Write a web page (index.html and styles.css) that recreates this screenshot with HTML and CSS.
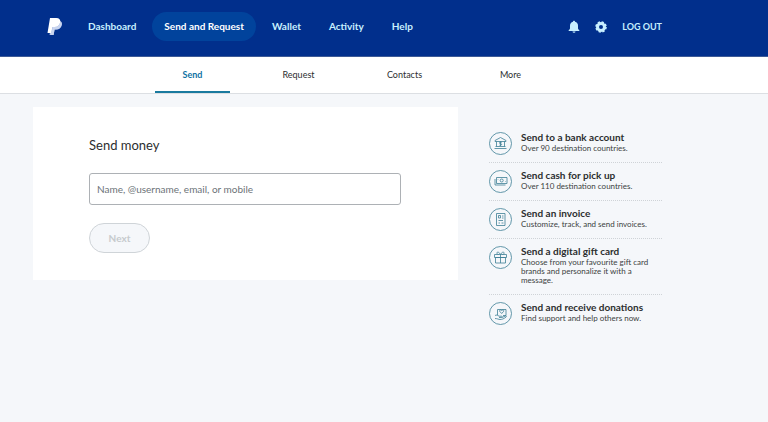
FILE: index.html
```html
<!DOCTYPE html>
<html lang="en">
    <head>
        <meta charset="utf-8">
        <title>Send money - PayPal</title>
        <link rel="stylesheet" href="styles.css">
    </head>
    <body>
        <header class="header">
            <a class="logo" href="#" aria-label="PayPal">
                <svg width="16" height="19" viewBox="0 0 16 19">
                    <path d="M5 3.500h6c3 0 4.300 1.600 3.800 4.300-.6 3.200-2.600 4.700-5.600 4.700H7.600L6.600 18H2.500z" fill="#9fb2de"/>
                    <path d="M3 1h6.300c3 0 4.400 1.600 3.900 4.300-.6 3.200-2.700 4.800-5.700 4.800H5.400L4.200 16H.5z" fill="#fff"/>
                    <path d="M5.800 10.100h1.700c3 0 5.100-1.600 5.700-4.800l.1-.9c1.400.7 1.800 1.900 1.500 3.400-.6 3.200-2.600 4.700-5.600 4.700H7.600L6.600 18H3.200l.4-2h.6z" fill="#c9d5ef"/>
                </svg>
            </a>
            <nav class="menu">
                <a class="menu-link" href="#">Dashboard</a>
                <a class="menu-link active" href="#">Send and Request</a>
                <a class="menu-link" href="#">Wallet</a>
                <a class="menu-link" href="#">Activity</a>
                <a class="menu-link" href="#">Help</a>
            </nav>
            <div class="account">
                <a class="account-link" href="#" aria-label="Notifications">
                    <svg width="12" height="14" viewBox="0 0 12 14" fill="currentColor">
                        <path d="M6 .8c.7 0 1 .4 1 .9 2 .5 3 2 3 4v2.500c0 .8.500 1.300 1.300 1.800v1H.7v-1C1.500 9.500 2 9 2 8.200V5.700c0-2 1-3.500 3-4 0-.5.3-.9 1-.9z"/>
                        <path d="M4.500 11.500h3a1.500 1.300 0 0 1-3 0z"/>
                    </svg>
                </a>
                <a class="account-link" href="#" aria-label="Settings">
                    <svg width="12" height="12" viewBox="0 0 12 12">
                        <circle cx="6" cy="6" r="3.500" fill="none" stroke="currentColor" stroke-width="3"/>
                        <circle cx="6" cy="6" r="5" fill="none" stroke="currentColor" stroke-width="1.600" stroke-dasharray="2.300 1.627"/>
                    </svg>
                </a>
                <a class="logout" href="#">LOG OUT</a>
            </div>
        </header>

        <nav class="tabs">
            <a class="tab active" href="#">Send</a>
            <a class="tab" href="#">Request</a>
            <a class="tab" href="#">Contacts</a>
            <a class="tab" href="#">More</a>
        </nav>

        <main class="main">
            <form class="card">
                <h1 class="title">Send money</h1>
                <input class="recipient" type="text" placeholder="Name, @username, email, or mobile" aria-label="Name, @username, email, or mobile">
                <button class="next" type="button" disabled>Next</button>
            </form>

            <aside class="options">
                <a class="option" href="#">
                    <svg class="icon" viewBox="0 0 23 23">
                        <circle cx="11.500" cy="11.500" r="11"/>
                        <path d="M6 8.500 11.500 5.500 17 8.500v1H6zM7.500 9.500v5M15.500 9.500v5M6.500 14.500h10M5.500 16.500h12"/>
                        <path d="M12.800 10.200h-1.600c-1 0-1 1.500 0 1.500h.7c1 0 1 1.500 0 1.500h-1.500M11.500 9.500v4.500"/>
                    </svg>
                    <div class="text">
                        <h2 class="name">Send to a bank account</h2>
                        <p class="info">Over 90 destination countries.</p>
                    </div>
                </a>
                <a class="option" href="#">
                    <svg class="icon" viewBox="0 0 23 23">
                        <circle cx="11.500" cy="11.500" r="11"/>
                        <path d="M7.500 7.500h10.500v6H7.500zM6 9v6h10.500"/>
                        <circle cx="12.700" cy="10.500" r="1.500"/>
                        <path d="M9 9v.5M16.500 11.500v.5"/>
                    </svg>
                    <div class="text">
                        <h2 class="name">Send cash for pick up</h2>
                        <p class="info">Over 110 destination countries.</p>
                    </div>
                </a>
                <a class="option" href="#">
                    <svg class="icon" viewBox="0 0 23 23">
                        <circle cx="11.500" cy="11.500" r="11"/>
                        <path d="M7.500 5.500h8.500v12H7.500zM9.500 7.500h2v2.500h-2zM13 8h1.500M13 10h1.500M9.500 12.500h4.500M9.500 15h1.500M12.500 15h2"/>
                    </svg>
                    <div class="text">
                        <h2 class="name">Send an invoice</h2>
                        <p class="info">Customize, track, and send invoices.</p>
                    </div>
                </a>
                <a class="option" href="#">
                    <svg class="icon" viewBox="0 0 23 23">
                        <circle cx="11.500" cy="11.500" r="11"/>
                        <path d="M5.500 8.500h12v3h-12zM6.500 11.500h10v5.500h-10zM11.500 8.500v8.500"/>
                        <path d="M11.500 8.500C10 5.500 7.500 5.500 8 7.500c.2.700 1 1 1.500 1M11.500 8.500c1.500-3 4-3 3.500-1-.2.700-1 1-1.500 1"/>
                    </svg>
                    <div class="text">
                        <h2 class="name">Send a digital gift card</h2>
                        <p class="info">Choose from your favourite gift card brands and personalize it with a message.</p>
                    </div>
                </a>
                <a class="option" href="#">
                    <svg class="icon" viewBox="0 0 23 23">
                        <circle cx="11.500" cy="11.500" r="11"/>
                        <path d="M8.500 13V7.500h8.500v6H14"/>
                        <path d="M12.700 11.500 10.700 9.300c-.6-1.200 1.300-2 2-.7.700-1.300 2.600-.5 2 .7z"/>
                        <path d="M6 13.500c1.500-.8 2.500-.5 4 .7h2.500c1 0 .8 1.300 0 1.300H10M12.800 15.500l3.700-1.500c1-.2 1.200.6.500 1.100-2.500 1.900-4 2.400-6 2.400-1.500 0-2.500-1-5-1"/>
                    </svg>
                    <div class="text">
                        <h2 class="name">Send and receive donations</h2>
                        <p class="info">Find support and help others now.</p>
                    </div>
                </a>
            </aside>
        </main>
    </body>
</html>
```

FILE: styles.css
```css
* {
    box-sizing: border-box;
}

body {
    margin: 0;
    font-family: Lato, "Liberation Sans", sans-serif;
    background-color: #f5f7fa;
    color: #2c2e2f;
}

a {
    color: inherit;
    text-decoration: none;
}

.header {
    display: flex;
    align-items: center;
    height: 57px;
    padding: 0 106px 3px 47px;
    border-bottom: 1px solid #3d5a96;
    background-color: #012f8c;
    color: #c8efff;
    font-weight: bold;
}

.logo {
    display: flex;
    margin-right: 13px;
}

.menu {
    display: flex;
    gap: 4px;
    font-size: 10px;
}

.menu-link {
    padding: 0 12px;
    border-radius: 15px;
    line-height: 29px;
}

.menu-link.active {
    background-color: #01439c;
    color: white;
}

.account {
    display: flex;
    align-items: center;
    gap: 15px;
    margin-left: auto;
    font-size: 9px;
}

.account-link {
    display: flex;
}

.tabs {
    display: flex;
    justify-content: center;
    gap: 31px;
    height: 37px;
    padding-right: 65px;
    border-bottom: 1px solid #dcdfe3;
    background-color: white;
    font-size: 9px;
    line-height: 35px;
}

.tab {
    width: 75px;
    text-align: center;
}

.tab.active {
    border-bottom: 2px solid #1a7a9f;
    color: #1072a4;
    font-weight: bold;
}

.main {
    display: flex;
    align-items: flex-start;
    gap: 31px;
    padding: 13px 106px 13px 33px;
}

.card {
    flex: 1;
    padding: 28px 57px 27px 56px;
    background-color: white;
}

.title {
    margin: 0 0 18px;
    font-size: 13px;
    font-weight: normal;
    line-height: 20px;
}

.recipient {
    display: block;
    width: 100%;
    height: 32px;
    margin-bottom: 18px;
    padding: 0 7px;
    border: 1px solid #adb1b5;
    border-radius: 3px;
    font-family: inherit;
    font-size: 10px;
}

.recipient::placeholder {
    color: #6c7378;
}

.next {
    width: 61px;
    height: 30px;
    border: 1px solid #cfd4d8;
    border-radius: 15px;
    background-color: #f5f7fa;
    color: #c6cacd;
    font-family: inherit;
    font-size: 10px;
    font-weight: bold;
}

.options {
    width: 173px;
    padding-top: 18px;
}

.option {
    display: flex;
    gap: 9px;
    padding: 6px 0 7px;
    border-bottom: 1px dotted #cfd3d7;
}

.option:last-child {
    border-bottom: none;
}

.icon {
    flex: none;
    width: 23px;
    height: 23px;
    margin-top: 1px;
    fill: none;
    stroke: #3d7f96;
    stroke-width: 0.8;
}

.text {
    padding-bottom: 2px;
}

.name {
    margin: 0;
    font-size: 10px;
    line-height: 13px;
}

.info {
    margin: 0;
    color: #3c3f41;
    font-size: 8px;
    line-height: 9px;
}
```
